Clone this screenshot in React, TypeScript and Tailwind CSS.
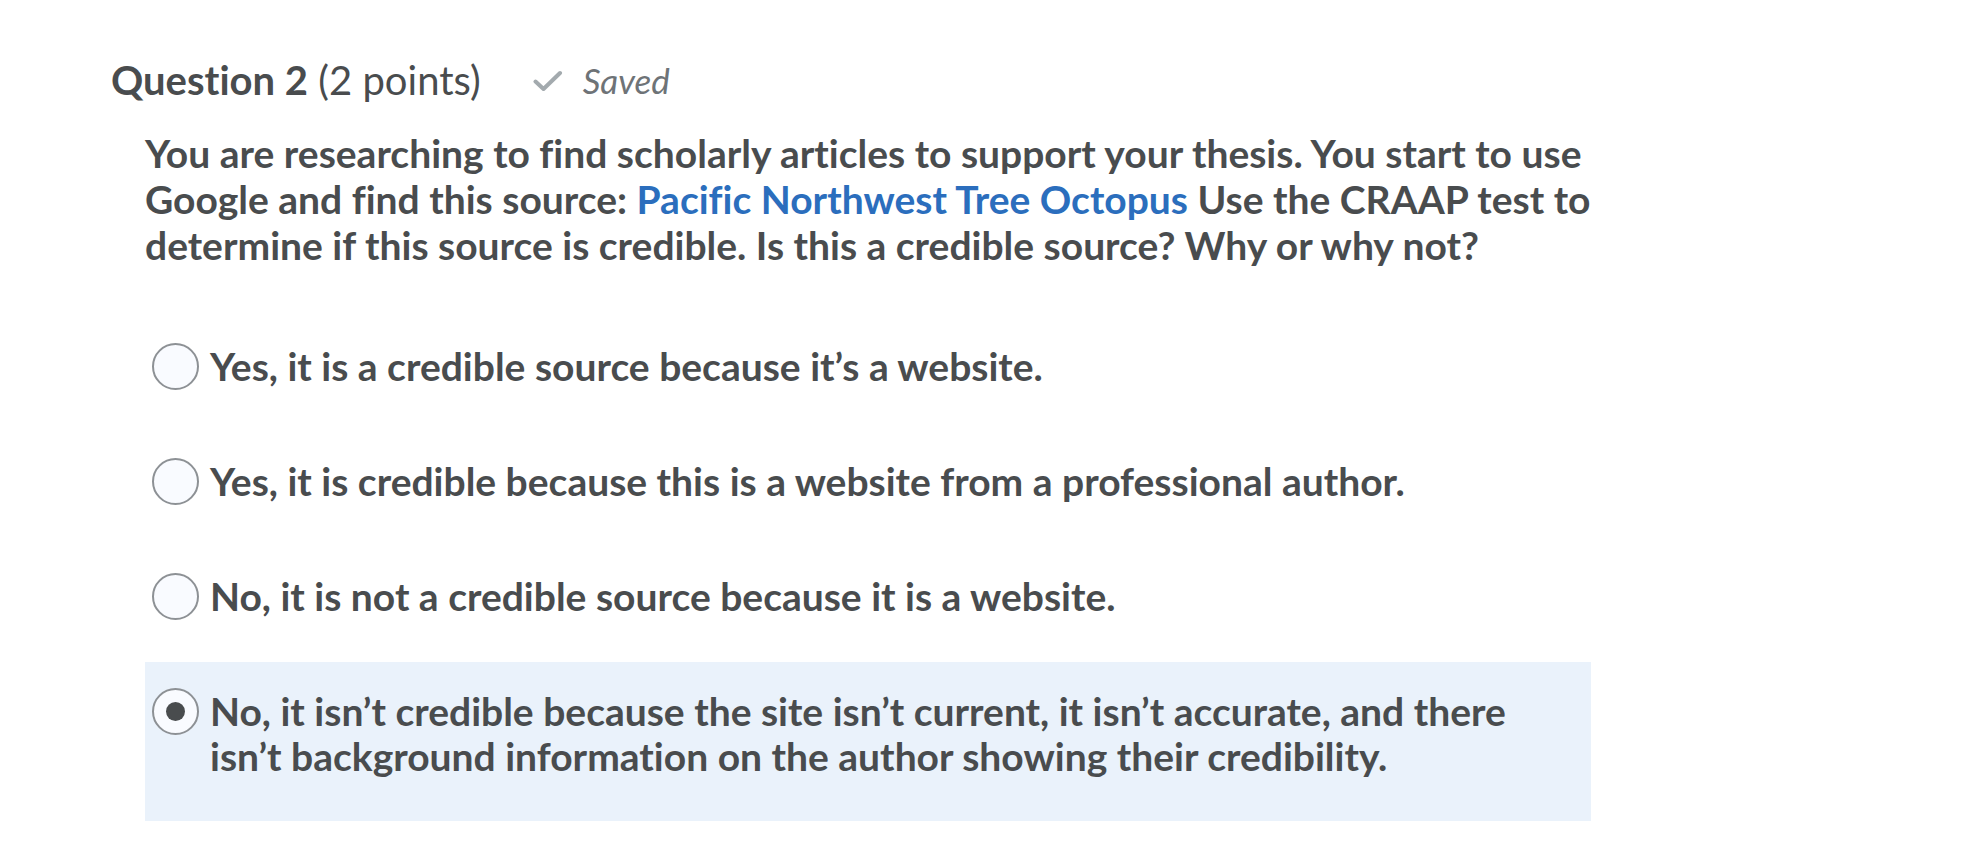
import React, { useState } from 'react';

const options = [
  'Yes, it is a credible source because it’s a website.',
  'Yes, it is credible because this is a website from a professional author.',
  'No, it is not a credible source because it is a website.',
  'No, it isn’t credible because the site isn’t current, it isn’t accurate, and there isn’t background information on the author showing their credibility.',
];

const Radio: React.FC<{ checked: boolean }> = ({ checked }) => (
  <span className="mt-[-1px] flex h-[47px] w-[47px] shrink-0 items-center justify-center rounded-full border-2 border-[#8d9195] bg-[#f9fbff]">
    {checked && <span className="h-[19px] w-[19px] rounded-full bg-[#494c4e]" />}
  </span>
);

export default function App() {
  const [selected, setSelected] = useState(3);

  return (
    <div
      className="min-h-screen bg-white pl-[111px] pt-[58px] text-[#494c4e] [font-variant-ligatures:none]"
      style={{ fontFamily: 'Lato, "Open Sans", sans-serif' }}
    >
      <div className="flex items-center">
        <h2 className="text-[40px] leading-[44px]">
          <span className="font-bold">Question 2</span> <span className="font-normal">(2 points)</span>
        </h2>
        <div className="ml-[52px] flex items-center gap-[20px] text-[#6e7377]">
          <svg width="30" height="22" viewBox="0 0 30 22" className="mt-[2px]">
            <path d="M2.5 11.5 L10.5 19 L27 3" fill="none" stroke="#a3aaae" strokeWidth="4" strokeLinecap="round" strokeLinejoin="round" />
          </svg>
          <span className="text-[35px] italic leading-[44px]">Saved</span>
        </div>
      </div>

      <div className="ml-[34px] mt-[28px] w-[1446px]">
        <p className="text-[39px] font-bold leading-[46px]">
          You are researching to find scholarly articles to support your thesis. You start to use Google and find this source:{' '}
          <a className="text-[#2b6ebd]">Pacific Northwest Tree Octopus</a> Use the CRAAP test to determine if this source is credible. Is this a credible source? Why or why not?
        </p>

        <div className="mt-[49px] flex flex-col">
          {options.map((text, i) => (
            <label
              key={i}
              onClick={() => setSelected(i)}
              className={`flex cursor-pointer items-start gap-[11px] pl-[7px] pr-[60px] pt-[27px] pb-[42px] ${selected === i ? 'bg-[#eaf2fb]' : ''}`}
            >
              <Radio checked={selected === i} />
              <span className="text-[39px] font-bold leading-[45px]">{text}</span>
            </label>
          ))}
        </div>
      </div>
    </div>
  );
}
